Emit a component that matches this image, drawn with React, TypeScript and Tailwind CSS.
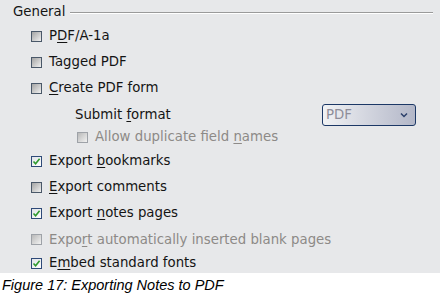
import React from "react";

type BoxKind = "off" | "on" | "disabled";

function Box({ kind }: { kind: BoxKind }) {
  if (kind === "on") {
    return (
      <div className="w-[11px] h-[11px] shrink-0 border border-[#2e4a78] bg-linear-to-br from-[#dfe3e8] to-[#ffffff] flex items-center justify-center">
        <svg width="9" height="9" viewBox="0 0 9 9">
          <path d="M1.5 4.5 L3.6 6.8 L7.6 1.8" fill="none" stroke="#2f9a2f" strokeWidth="1.6" />
        </svg>
      </div>
    );
  }
  if (kind === "disabled") {
    return (
      <div className="w-[11px] h-[11px] shrink-0 border border-[#9ea2a8] bg-linear-to-br from-[#b9b9b9] to-[#f2f2f2]" />
    );
  }
  return (
    <div className="w-[11px] h-[11px] shrink-0 border border-[#4a5869] bg-linear-to-br from-[#a4a4a4] to-[#f1f1f1]" />
  );
}

function Row({
  kind,
  h,
  pl,
  disabled,
  children,
}: {
  kind: BoxKind;
  h: string;
  pl: string;
  disabled?: boolean;
  children: React.ReactNode;
}) {
  return (
    <div className={`flex items-center ${h} ${pl}`}>
      <Box kind={kind} />
      <span
        className={`ml-[7px] leading-[16px] whitespace-nowrap ${
          disabled ? "text-[#8d8a87]" : "text-[#141414]"
        }`}
      >
        {children}
      </span>
    </div>
  );
}

const U = ({ children }: { children: React.ReactNode }) => (
  <span className="underline decoration-1 underline-offset-[2px]">{children}</span>
);

export default function App() {
  return (
    <div className="w-[440px] h-[304px] bg-white overflow-hidden">
      <div
        className="h-[273px] bg-[#e7e8ea] text-[13.3px] overflow-hidden"
        style={{ fontFamily: '"DejaVu Sans", sans-serif' }}
      >
        <div className="flex items-center h-[24px] pl-[13px]">
          <span className="leading-[16px] text-[#141414]">General</span>
          <div className="ml-[5px] w-[363px] mt-[2px]">
            <div className="h-px bg-[#9a9a9a]" />
            <div className="h-px bg-white" />
          </div>
        </div>
        <Row kind="off" h="h-[24px]" pl="pl-[31px]">
          P<U>D</U>F/A-1a
        </Row>
        <Row kind="off" h="h-[28px]" pl="pl-[31px]">
          Tagged PDF
        </Row>
        <Row kind="off" h="h-[24px]" pl="pl-[31px]">
          <U>C</U>reate PDF form
        </Row>
        <div className="flex items-center h-[28px] pl-[75px] mt-[1px]">
          <span className="leading-[16px] text-[#141414] whitespace-nowrap">
            Submit <U>f</U>ormat
          </span>
          <div className="ml-auto mr-[24px] w-[94px] h-[22px] rounded-[3px] border border-[#1c3866] bg-linear-to-r from-[#f1f2f4] to-[#b3b7c8] flex items-center pl-[3px] pr-[7px]">
            <span className="text-[#8e8d99] leading-[16px]">PDF</span>
            <svg className="ml-auto" width="8" height="6" viewBox="0 0 8 6">
              <path d="M1 1.5 L4 4.5 L7 1.5" fill="none" stroke="#2b3f6a" strokeWidth="1.5" />
            </svg>
          </div>
        </div>
        <Row kind="disabled" h="h-[16px]" pl="pl-[77px]" disabled>
          Allow duplicate field <U>n</U>ames
        </Row>
        <div className="h-[3px]" />
        <Row kind="on" h="h-[26px]" pl="pl-[31px]">
          Export <U>b</U>ookmarks
        </Row>
        <Row kind="off" h="h-[26px]" pl="pl-[31px]">
          <U>E</U>xport comments
        </Row>
        <Row kind="on" h="h-[26px]" pl="pl-[31px]">
          Export <U>n</U>otes pages
        </Row>
        <Row kind="disabled" h="h-[27px]" pl="pl-[31px]" disabled>
          Expo<U>r</U>t automatically inserted blank pages
        </Row>
        <Row kind="on" h="h-[20px]" pl="pl-[31px]">
          E<U>m</U>bed standard fonts
        </Row>
      </div>
      <div
        className="pl-[2px] pt-[3px] italic text-[14.5px] leading-[18px] text-black"
        style={{ fontFamily: '"Liberation Sans", Arial, sans-serif' }}
      >
        Figure 17: Exporting Notes to PDF
      </div>
    </div>
  );
}
